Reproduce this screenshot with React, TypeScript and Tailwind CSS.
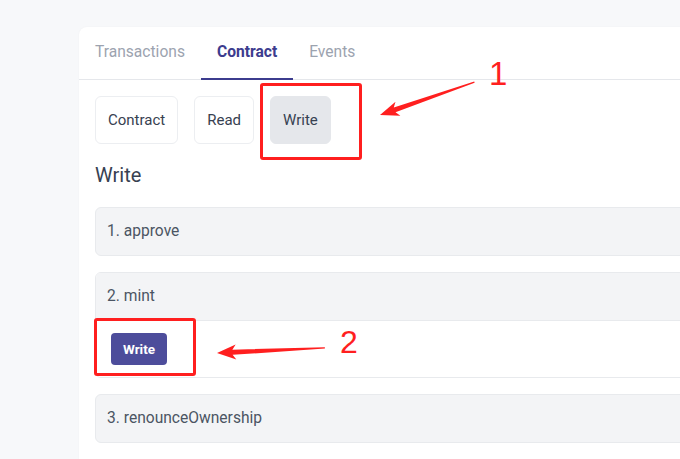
import React from 'react';

const tabs = ['Transactions', 'Contract', 'Events'];
const modes = ['Contract', 'Read', 'Write'];

function Arrow({ x, y, angle, length }: { x: number; y: number; angle: number; length: number }) {
  // tip at origin, body runs along +x
  const pts = `0,0 19,-7.5 15.5,-2.6 ${length},-0.6 ${length},0.6 15.5,2.6 19,7.5`;
  return <polygon points={pts} fill="#ff1f1f" transform={`translate(${x} ${y}) rotate(${angle})`} />;
}

export default function App() {
  return (
    <div
      className="relative h-[459px] w-[680px] overflow-hidden bg-[#f7f8fa] pt-[27px] pl-[79px]"
      style={{ fontFamily: 'Roboto, "Noto Sans", sans-serif' }}
    >
      <div className="w-[1000px] rounded-lg bg-white shadow-[0_0_2px_rgba(0,0,0,0.04)]">
        {/* Tabs */}
        <div className="flex h-[53px] border-b border-gray-200">
          {tabs.map((t) => (
            <div
              key={t}
              className={
                t === 'Contract'
                  ? 'flex h-[53px] items-center border-b-2 border-[#3c3c8e] px-4 pt-[1px] text-[15.6px] font-bold text-[#3c3c8e]'
                  : 'flex h-[53px] items-center border-b-2 border-transparent px-4 pt-[1px] text-[15.6px] text-[#9ca3af]'
              }
            >
              {t}
            </div>
          ))}
        </div>

        <div className="px-4 pt-4">
          {/* Mode buttons */}
          <div className="flex gap-4">
            {modes.map((m) => (
              <div
                key={m}
                className={
                  m === 'Write'
                    ? 'flex h-12 items-center rounded-md border border-[#e5e7eb] bg-[#e5e7eb] px-3 text-[15px] text-[#374151]'
                    : 'flex h-12 items-center rounded-md border border-[#eceef1] bg-white px-3 text-[15px] text-[#374151]'
                }
              >
                {m}
              </div>
            ))}
          </div>

          <div className="mt-[17px] text-[20px] leading-7 text-[#374151]">Write</div>

          <div className="mt-[18px] flex flex-col gap-4">
            <div className="flex h-[49px] items-center rounded-md border border-[#e8eaed] bg-[#f3f4f6] pl-[11px] text-[15.6px] text-[#4b5563]">
              1. approve
            </div>

            <div className="overflow-hidden rounded-md border border-[#e8eaed]">
              <div className="flex h-[47px] items-center bg-[#f3f4f6] pl-[11px] text-[15.6px] text-[#4b5563]">
                2. mint
              </div>
              <div className="border-t border-[#e8eaed] bg-white px-[15px] py-3">
                <button className="h-8 rounded bg-[#4d4d9b] px-3 text-[13.5px] font-bold text-white">Write</button>
              </div>
            </div>

            <div className="flex h-[49px] items-center rounded-md border border-[#e8eaed] bg-[#f3f4f6] pl-[11px] text-[15.6px] text-[#4b5563]">
              3. renounceOwnership
            </div>

            {/* next item, only its top edge is in view */}
            <div className="h-[49px] rounded-md border border-[#e8eaed] bg-[#f3f4f6]" />
          </div>
        </div>
      </div>

      {/* Annotations */}
      <div className="absolute left-[260px] top-[83px] h-[77px] w-[102px] rounded-[3px] border-[3px] border-[#ff1f1f]" />
      <div className="absolute left-[94px] top-[318px] h-[58px] w-[102px] rounded-[3px] border-[3px] border-[#ff1f1f]" />
      <svg className="absolute left-0 top-0" width="680" height="459">
        <Arrow x={380} y={115} angle={-19.2} length={100} />
        <Arrow x={217} y={353} angle={-2.7} length={108} />
      </svg>
      <div
        className="absolute left-[489px] top-[55px] text-[33px] leading-[38px] text-[#ff1f1f]"
        style={{ fontFamily: '"Liberation Sans", sans-serif' }}
      >
        1
      </div>
      <div
        className="absolute left-[340px] top-[324px] text-[32px] leading-[36px] text-[#ff1f1f]"
        style={{ fontFamily: '"Liberation Sans", sans-serif' }}
      >
        2
      </div>
    </div>
  );
}
